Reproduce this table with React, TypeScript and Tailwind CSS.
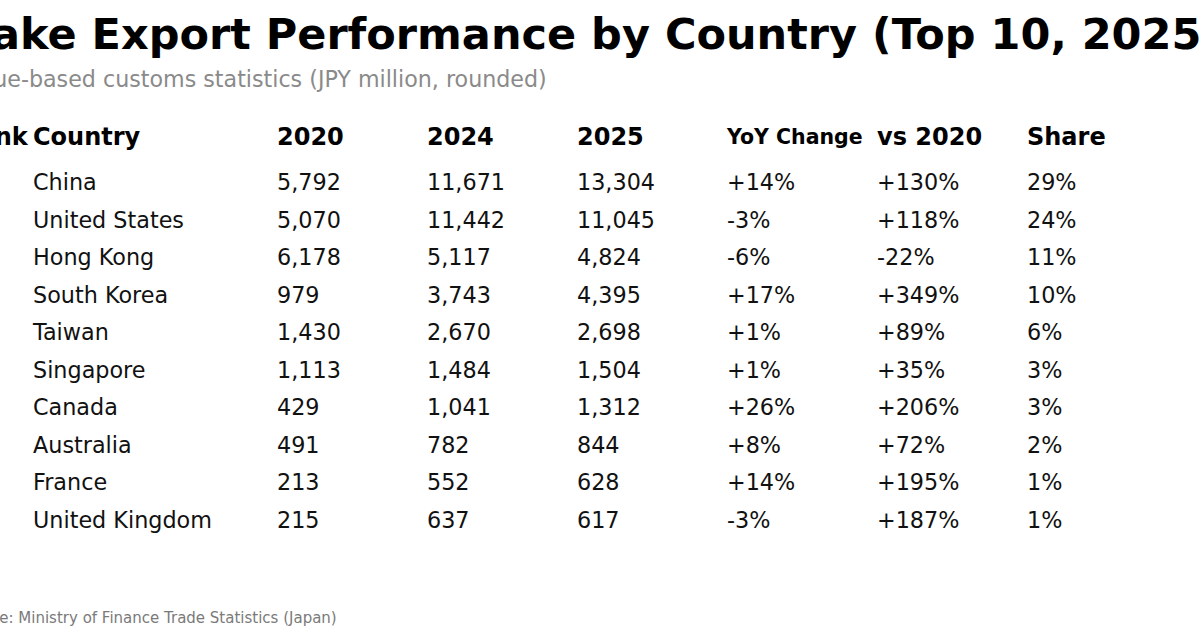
// Cropped table image: sake exports by country, top 10.
const ROWS = [
  { rank: 1, country: "China", y2020: "5,792", y2024: "11,671", y2025: "13,304", yoy: "+14%", vs2020: "+130%", share: "29%" },
  { rank: 2, country: "United States", y2020: "5,070", y2024: "11,442", y2025: "11,045", yoy: "-3%", vs2020: "+118%", share: "24%" },
  { rank: 3, country: "Hong Kong", y2020: "6,178", y2024: "5,117", y2025: "4,824", yoy: "-6%", vs2020: "-22%", share: "11%" },
  { rank: 4, country: "South Korea", y2020: "979", y2024: "3,743", y2025: "4,395", yoy: "+17%", vs2020: "+349%", share: "10%" },
  { rank: 5, country: "Taiwan", y2020: "1,430", y2024: "2,670", y2025: "2,698", yoy: "+1%", vs2020: "+89%", share: "6%" },
  { rank: 6, country: "Singapore", y2020: "1,113", y2024: "1,484", y2025: "1,504", yoy: "+1%", vs2020: "+35%", share: "3%" },
  { rank: 7, country: "Canada", y2020: "429", y2024: "1,041", y2025: "1,312", yoy: "+26%", vs2020: "+206%", share: "3%" },
  { rank: 8, country: "Australia", y2020: "491", y2024: "782", y2025: "844", yoy: "+8%", vs2020: "+72%", share: "2%" },
  { rank: 9, country: "France", y2020: "213", y2024: "552", y2025: "628", yoy: "+14%", vs2020: "+195%", share: "1%" },
  { rank: 10, country: "United Kingdom", y2020: "215", y2024: "637", y2025: "617", yoy: "-3%", vs2020: "+187%", share: "1%" },
];

const GRID = "grid grid-cols-[73px_244px_150px_150px_150px_150px_150px_150px] whitespace-nowrap";

export default function App() {
  return (
    <div className="h-[629px] w-[1200px] overflow-hidden bg-white pt-[10px] font-['DejaVu_Sans',sans-serif] text-[#111]">
      <h1 className="-ml-[40px] whitespace-nowrap text-[43px] font-bold leading-[48px] text-black">
        Sake Export Performance by Country (Top 10, 2025)
      </h1>
      <p className="-ml-[40px] mt-[7px] whitespace-nowrap text-[22.2px] leading-[28px] text-[#8a8a8a]">
        Value-based customs statistics (JPY million, rounded)
      </p>

      <div className="-ml-[40px] mt-[26px]">
        <div className={`${GRID} h-[36px] items-center text-[24px] font-bold leading-[36px] text-black`}>
          <span>Rank</span>
          <span>Country</span>
          <span>2020</span>
          <span>2024</span>
          <span>2025</span>
          <span className="text-[20.5px]">YoY Change</span>
          <span>vs 2020</span>
          <span>Share</span>
        </div>
        <div className="mt-[9px]">
          {ROWS.map((r) => (
            <div key={r.rank} className={`${GRID} h-[37.5px] text-[22.3px] leading-[37.5px]`}>
              <span>{r.rank}</span>
              <span>{r.country}</span>
              <span>{r.y2020}</span>
              <span>{r.y2024}</span>
              <span>{r.y2025}</span>
              <span>{r.yoy}</span>
              <span>{r.vs2020}</span>
              <span>{r.share}</span>
            </div>
          ))}
        </div>
      </div>

      <p className="-ml-[43px] mt-[69px] whitespace-nowrap text-[15px] leading-[20px] text-[#7a7a7a]">
        Source: Ministry of Finance Trade Statistics (Japan)
      </p>
    </div>
  );
}
